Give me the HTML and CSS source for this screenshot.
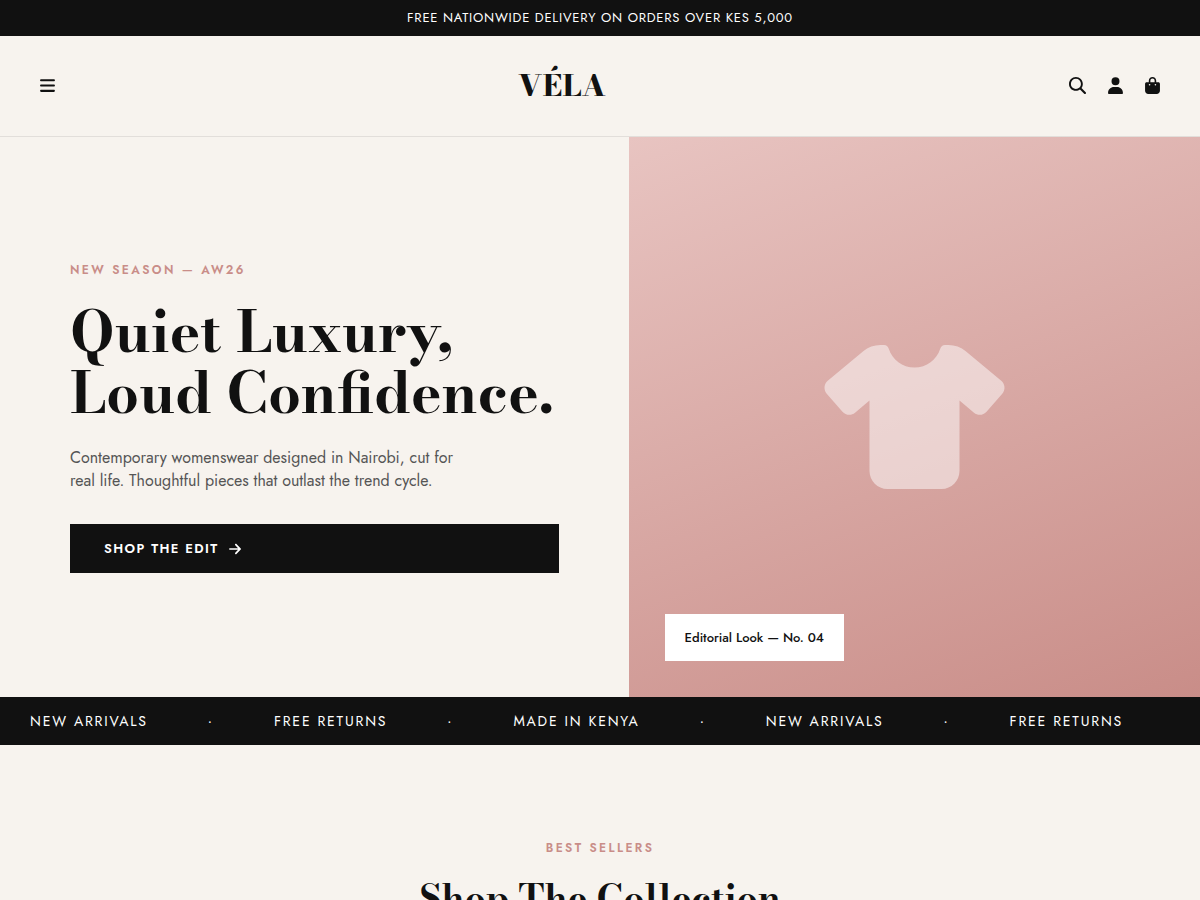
FILE: index.html
```html
<!DOCTYPE html>
<html lang="en">

<head>
  <meta charset="UTF-8">
  <meta name="viewport" content="width=device-width, initial-scale=1.0">
  <title>VÉLA</title>
  <link rel="stylesheet" href="styles.css">
</head>

<body>
  <div class="topbar">FREE NATIONWIDE DELIVERY ON ORDERS OVER KES 5,000</div>

  <header class="header">
    <button class="icon-btn" aria-label="Menu">
      <svg class="icon" viewBox="0 0 448 512"><path d="M0 96C0 78.3 14.3 64 32 64H416c17.7 0 32 14.3 32 32s-14.3 32-32 32H32C14.3 128 0 113.7 0 96zM0 256c0-17.7 14.3-32 32-32H416c17.7 0 32 14.3 32 32s-14.3 32-32 32H32c-17.7 0-32-14.3-32-32zM448 416c0 17.7-14.3 32-32 32H32c-17.7 0-32-14.3-32-32s14.3-32 32-32H416c17.7 0 32 14.3 32 32z"/></svg>
    </button>
    <a href="#" class="logo">VÉLA</a>
    <div class="header-icons">
      <button class="icon-btn" aria-label="Search">
        <svg class="icon icon-wide" viewBox="0 0 512 512"><path d="M416 208c0 45.9-14.9 88.3-40 122.7L502.6 457.4c12.5 12.5 12.5 32.8 0 45.3s-32.8 12.5-45.3 0L330.7 376c-34.4 25.2-76.8 40-122.7 40C93.1 416 0 322.9 0 208S93.1 0 208 0S416 93.1 416 208zM208 360a152 152 0 1 0 0-304 152 152 0 1 0 0 304z"/></svg>
      </button>
      <button class="icon-btn" aria-label="Account">
        <svg class="icon" viewBox="0 0 448 512"><path d="M224 248a120 120 0 1 0 0-240 120 120 0 1 0 0 240zm-45.7 56C79.8 304 0 383.8 0 482.3C0 498.7 13.3 512 29.7 512H418.3c16.4 0 29.7-13.3 29.7-29.7C448 383.8 368.2 304 269.7 304H178.3z"/></svg>
      </button>
      <button class="icon-btn" aria-label="Bag">
        <svg class="icon" viewBox="0 0 448 512"><path d="M160 112c0-35.3 28.7-64 64-64s64 28.7 64 64v48H160V112zm-48 48H48c-26.5 0-48 21.5-48 48V416c0 53 43 96 96 96H352c53 0 96-43 96-96V208c0-26.5-21.5-48-48-48H336V112C336 50.1 285.9 0 224 0S112 50.1 112 112v48zm24 48a24 24 0 1 1 0 48 24 24 0 1 1 0-48zm152 24a24 24 0 1 1 48 0 24 24 0 1 1 -48 0z"/></svg>
      </button>
    </div>
  </header>

  <section class="hero">
    <div class="hero-text">
      <div class="eyebrow">NEW SEASON — AW26</div>
      <h1>Quiet Luxury,<br>Loud Confidence.</h1>
      <p>Contemporary womenswear designed in Nairobi, cut for real life. Thoughtful pieces that outlast the trend cycle.</p>
      <a href="#collection" class="btn">SHOP THE EDIT
        <svg class="arrow" viewBox="0 0 448 512"><path d="M438.6 278.6c12.5-12.5 12.5-32.8 0-45.3l-160-160c-12.5-12.5-32.8-12.5-45.3 0s-12.5 32.8 0 45.3L338.8 224 32 224c-17.7 0-32 14.3-32 32s14.3 32 32 32l306.7 0L233.4 393.4c-12.5 12.5-12.5 32.8 0 45.3s32.8 12.5 45.3 0l160-160z"/></svg>
      </a>
    </div>
    <div class="hero-image">
      <svg class="shirt" viewBox="0 0 640 512"><path d="M211.8 0c7.8 0 14.3 5.7 16.7 13.2C240.8 51.9 277.1 80 320 80s79.2-28.1 91.5-66.8C413.9 5.7 420.4 0 428.2 0h12.6c22.5 0 44.2 7.9 61.5 22.3L628.5 127.4c6.6 5.5 10.7 13.5 11.4 22.1s-2.1 17.1-7.8 23.6l-56 64c-11.4 13.1-31.2 14.6-44.6 3.5L480 197.7V448c0 35.3-28.7 64-64 64H224c-35.3 0-64-28.7-64-64V197.7l-51.5 42.9c-13.3 11.1-33.1 9.6-44.6-3.5l-56-64c-5.7-6.5-8.5-15-7.8-23.6s4.8-16.6 11.4-22.1L137.7 22.3C155 7.9 176.7 0 199.2 0h12.6z"/></svg>
      <div class="tag">Editorial Look — No. 04</div>
    </div>
  </section>

  <div class="marquee">
    <span>NEW ARRIVALS</span>
    <span>·</span>
    <span>FREE RETURNS</span>
    <span>·</span>
    <span>MADE IN KENYA</span>
    <span>·</span>
    <span>NEW ARRIVALS</span>
    <span>·</span>
    <span>FREE RETURNS</span>
  </div>

  <section class="collection" id="collection">
    <div class="eyebrow">BEST SELLERS</div>
    <h2>Shop The Collection</h2>
  </section>
</body>

</html>
```
FILE: styles.css
```css
:root {
  --black: #111111;
  --cream: #f7f3ee;
  --rose: #c98d88;
  --blush: #e8c4c1;
  --line: #e2deda;
}

* {
  box-sizing: border-box;
  margin: 0;
  padding: 0;
}

body {
  background: var(--cream);
  color: var(--black);
  font-family: Jost, Lato, sans-serif;
  overflow-x: hidden;
}

a {
  color: inherit;
  text-decoration: none;
}

h1,
h2,
.logo {
  font-family: "Bodoni Moda", "Liberation Serif", serif;
  font-weight: 700;
}

.topbar {
  background: var(--black);
  color: #fff;
  text-align: center;
  font-size: 13px;
  line-height: 20px;
  letter-spacing: 0.06em;
  padding: 8px;
}

.header {
  display: flex;
  align-items: center;
  justify-content: space-between;
  padding: 25px 40px 26px;
  border-bottom: 1px solid var(--line);
}

.logo {
  font-size: 30px;
  font-weight: 800;
  line-height: 49px;
}

.header-icons {
  display: flex;
  gap: 22px;
}

.icon-btn {
  display: flex;
  background: none;
  border: none;
  color: inherit;
  cursor: pointer;
}

.icon {
  width: 15px;
  height: 17px;
  fill: currentColor;
}

.icon-wide {
  width: 17px;
}

.hero {
  display: grid;
  grid-template-columns: 1.1fr 1fr;
  min-height: 560px;
}

.hero-text {
  display: flex;
  flex-direction: column;
  justify-content: center;
  padding: 60px 70px;
}

.eyebrow {
  color: var(--rose);
  font-size: 12px;
  font-weight: 600;
  line-height: 18px;
  letter-spacing: 0.2em;
}

h1 {
  font-size: clamp(36px, 4.8vw, 72px);
  line-height: 61px;
  margin: 22px 0 23px;
}

.hero-text p {
  color: #555;
  font-size: 16px;
  line-height: 23px;
  max-width: 400px;
  margin-bottom: 32px;
}

.btn {
  display: flex;
  align-items: center;
  gap: 10px;
  background: var(--black);
  color: #fff;
  font-size: 13px;
  font-weight: 600;
  line-height: 17px;
  letter-spacing: 0.11em;
  padding: 16px 34px;
}

.arrow {
  width: 12px;
  height: 14px;
  fill: currentColor;
}

.hero-image {
  position: relative;
  display: flex;
  align-items: center;
  justify-content: center;
  background: linear-gradient(160deg, var(--blush), var(--rose));
}

.shirt {
  width: 181px;
  height: 144px;
  fill: #fff;
  opacity: 0.5;
}

.tag {
  position: absolute;
  left: 36px;
  bottom: 36px;
  background: #fff;
  font-size: 13px;
  font-weight: 500;
  line-height: 19px;
  padding: 14px 20px;
}

.marquee {
  display: flex;
  gap: 60px;
  overflow: hidden;
  background: var(--black);
  color: #fff;
  font-size: 14px;
  line-height: 20px;
  letter-spacing: 0.13em;
  white-space: nowrap;
  padding: 14px 30px;
}

.collection {
  text-align: center;
  padding: 94px 40px;
}

h2 {
  font-size: 37px;
  line-height: 48px;
  margin-top: 18px;
}
```
